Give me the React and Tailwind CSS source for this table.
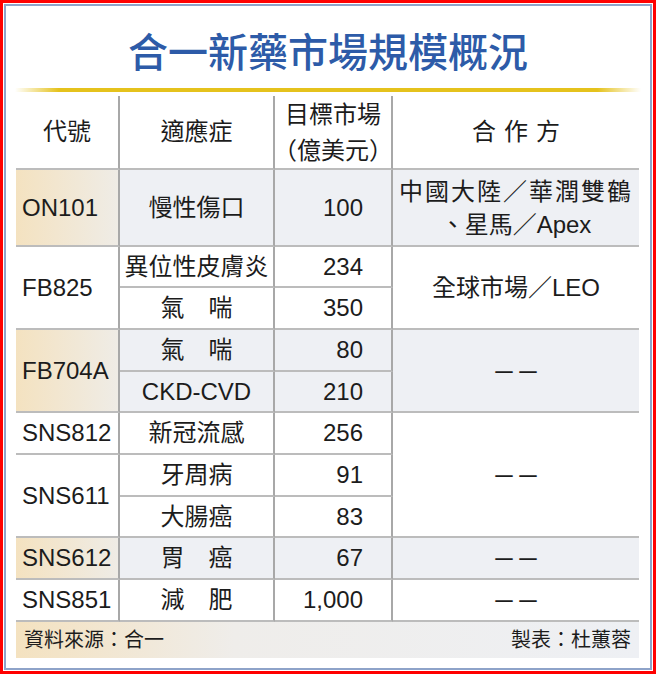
import React from "react";

const hl = "bg-[#eef0f4]";
const hl1 = "bg-[linear-gradient(to_right,#f4e2c0,#efece6)]";

function C({ pos, className = "", children }) {
  return (
    <div className={`flex items-center ${pos} ${className}`}>{children}</div>
  );
}

function Dash() {
  return <span className="font-['Noto_Sans_CJK_TC',sans-serif]">－－</span>;
}

export default function App() {
  const bR = "border-r-2 border-r-[#a8a8a8]";
  const bB = "border-b-2 border-b-[#bcbcbc]";
  const c1 = `${bR} ${bB} pl-[6px]`;
  const c2 = `${bR} ${bB} justify-center`;
  const c3 = `${bR} ${bB} justify-end pr-[28px]`;
  const c4 = `${bB} justify-center text-center`;
  return (
    <div className="w-[656px] h-[674px] border-[3px] border-[#ff0000] bg-white p-px font-['Liberation_Sans','Noto_Sans_CJK_TC',sans-serif] text-[#1c1c1c]">
      <div className="h-full border-2 border-[#8ea3c9] bg-white flex flex-col">
        <div className="h-[82px] flex items-center justify-center pt-[6px]">
          <h1 className="text-[40px] leading-none font-medium text-[#2d5ba8] font-['Noto_Sans_CJK_TC',sans-serif]">
            合一新藥市場規模概況
          </h1>
        </div>
        <div className="mx-[9px] h-[4px] bg-[linear-gradient(to_right,rgba(229,194,28,0),#e5c21c_7%,#e5c21c_93%,rgba(229,194,28,0))]" />
        <div className="ml-[10px] w-[623px] mt-[4px] grid grid-cols-[104px_155px_118px_246px] grid-rows-[74px_77px_41px_42px_42px_41px_42px_42px_41px_42px_42px] text-[24px] leading-none">
          {/* header */}
          <C pos="col-start-1 row-start-1" className={c2}>代號</C>
          <C pos="col-start-2 row-start-1" className={c2}>適應症</C>
          <C pos="col-start-3 row-start-1" className={`${c2} flex-col text-center leading-[34px] whitespace-nowrap`}>
            <span>目標市場</span>
            <span className="font-['Noto_Sans_CJK_TC',sans-serif] whitespace-nowrap">
              <span className="-ml-[10px]">（</span>億美元<span className="-mr-[10px]">）</span>
            </span>
          </C>
          <C pos="col-start-4 row-start-1" className={`${c4} tracking-[8px] pl-[8px]`}>合作方</C>

          {/* ON101 */}
          <C pos="col-start-1 row-start-2" className={`${c1} ${hl1}`}>ON101</C>
          <C pos="col-start-2 row-start-2" className={`${c2} ${hl}`}>慢性傷口</C>
          <C pos="col-start-3 row-start-2" className={`${c3} ${hl}`}>100</C>
          <C pos="col-start-4 row-start-2" className={`${c4} ${hl} flex-col leading-[33px]`}>
            <span className="tracking-[2px]">中國大陸／華潤雙鶴</span>
            <span>、星馬／Apex</span>
          </C>

          {/* FB825 */}
          <C pos="col-start-1 row-start-3 row-span-2" className={c1}>FB825</C>
          <C pos="col-start-2 row-start-3" className={c2}>異位性皮膚炎</C>
          <C pos="col-start-3 row-start-3" className={c3}>234</C>
          <C pos="col-start-2 row-start-4" className={c2}>氣　喘</C>
          <C pos="col-start-3 row-start-4" className={c3}>350</C>
          <C pos="col-start-4 row-start-3 row-span-2" className={c4}>全球市場／LEO</C>

          {/* FB704A */}
          <C pos="col-start-1 row-start-5 row-span-2" className={`${c1} ${hl1}`}>FB704A</C>
          <C pos="col-start-2 row-start-5" className={`${c2} ${hl}`}>氣　喘</C>
          <C pos="col-start-3 row-start-5" className={`${c3} ${hl}`}>80</C>
          <C pos="col-start-2 row-start-6" className={`${c2} ${hl}`}>CKD-CVD</C>
          <C pos="col-start-3 row-start-6" className={`${c3} ${hl}`}>210</C>
          <C pos="col-start-4 row-start-5 row-span-2" className={`${c4} ${hl}`}><Dash /></C>

          {/* SNS812 */}
          <C pos="col-start-1 row-start-7" className={c1}>SNS812</C>
          <C pos="col-start-2 row-start-7" className={c2}>新冠流感</C>
          <C pos="col-start-3 row-start-7" className={c3}>256</C>

          {/* SNS611 */}
          <C pos="col-start-1 row-start-8 row-span-2" className={c1}>SNS611</C>
          <C pos="col-start-2 row-start-8" className={c2}>牙周病</C>
          <C pos="col-start-3 row-start-8" className={c3}>91</C>
          <C pos="col-start-2 row-start-9" className={c2}>大腸癌</C>
          <C pos="col-start-3 row-start-9" className={c3}>83</C>
          <C pos="col-start-4 row-start-7 row-span-3" className={c4}><Dash /></C>

          {/* SNS612 */}
          <C pos="col-start-1 row-start-10" className={`${c1} ${hl1}`}>SNS612</C>
          <C pos="col-start-2 row-start-10" className={`${c2} ${hl}`}>胃　癌</C>
          <C pos="col-start-3 row-start-10" className={`${c3} ${hl}`}>67</C>
          <C pos="col-start-4 row-start-10" className={`${c4} ${hl}`}><Dash /></C>

          {/* SNS851 */}
          <C pos="col-start-1 row-start-11" className={c1}>SNS851</C>
          <C pos="col-start-2 row-start-11" className={c2}>減　肥</C>
          <C pos="col-start-3 row-start-11" className={c3}>1,000</C>
          <C pos="col-start-4 row-start-11" className={c4}><Dash /></C>
        </div>
        <div className="ml-[10px] w-[623px] h-[36px] flex items-center justify-between px-[8px] text-[20px] leading-none bg-[linear-gradient(to_right,#f4e2c0,#efedea_35%,#eef0f4)]">
          <span>資料來源：合一</span>
          <span>製表：杜蕙蓉</span>
        </div>
      </div>
    </div>
  );
}
